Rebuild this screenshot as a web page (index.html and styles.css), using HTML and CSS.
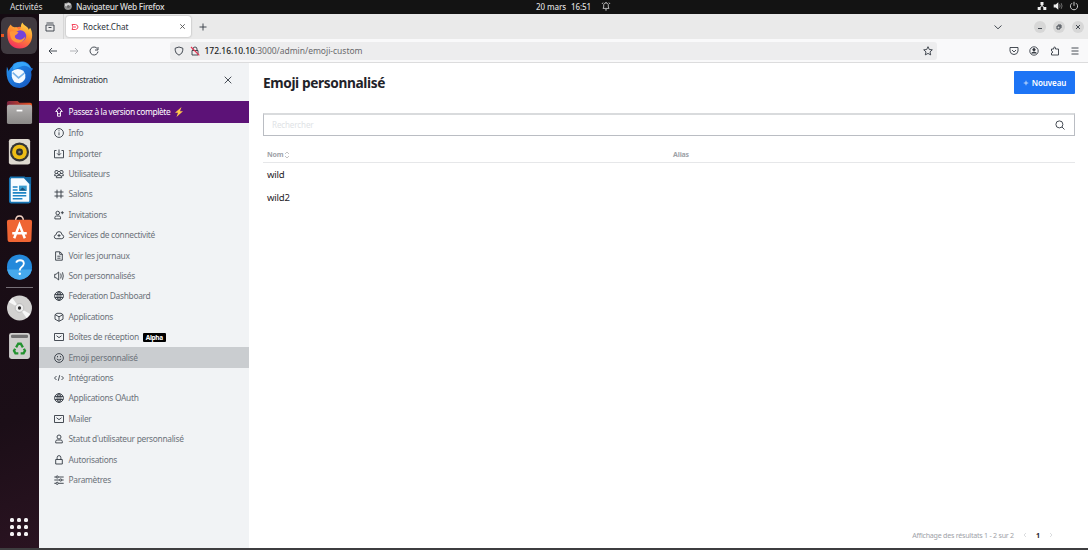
FILE: index.html
```html
<!DOCTYPE html>
<html lang="fr">
<head>
<meta charset="utf-8">
<title>Rocket.Chat</title>
<link rel="stylesheet" href="styles.css">
</head>
<body>
<svg class="defs" width="0" height="0">
  <defs>
    <linearGradient id="fire" x1=".8" y1="0" x2=".3" y2="1"><stop offset="0" stop-color="#ffe04a"/><stop offset=".45" stop-color="#ff9030"/><stop offset="1" stop-color="#f52c60"/></linearGradient>
    <linearGradient id="blue" x1="0" y1="0" x2="1" y2="1"><stop offset="0" stop-color="#2795f2"/><stop offset="1" stop-color="#1454bd"/></linearGradient>
    <linearGradient id="grey" x1="0" y1="0" x2="0" y2="1"><stop offset="0" stop-color="#b3b1b0"/><stop offset="1" stop-color="#8b8988"/></linearGradient>
    <linearGradient id="folder" x1="0" y1="0" x2="1" y2="0"><stop offset="0" stop-color="#7c2440"/><stop offset="1" stop-color="#e85420"/></linearGradient>
    <symbol id="globe" viewBox="0 0 12 12"><circle cx="6" cy="6" r="4.400"/><ellipse cx="6" cy="6" rx="2" ry="4.400"/><path d="M1.800 4.500h8.400M1.800 7.500h8.400M6 1.600v8.800"/></symbol>
    <symbol id="mail" viewBox="0 0 12 12"><path d="M1.500 2.500h9v7h-9zM3.500 4.700L6 6.700l2.500-2"/></symbol>
  </defs>
</svg>
<div class="desktop">
  <header class="topbar">
    <span class="activities">Activités</span>
    <svg class="app-icon" viewBox="0 0 10 10"><circle cx="5" cy="5.200" r="3.800" fill="#8d8d8d"/><path d="M1.500 2l2 1 2-1.500L8 3 7 5 4 5.500 2 5z" fill="#d0d0d0"/><circle cx="5.400" cy="5.600" r="1.500" fill="#666"/></svg>
    <span class="app-name">Navigateur Web Firefox</span>
    <span class="clock"><span>20 mars</span><span>16:51</span></span>
    <svg class="bell" viewBox="0 0 10 10"><path d="M2 7.400h6L7.300 6V4C7.300 2.700 6.300 2 5 2S2.700 2.700 2.700 4v2zM4 8.900h2M1 3l1-1.400M9 3L8 1.600M5 1v1"/></svg>
    <span class="tray">
      <svg viewBox="0 0 10 10" fill="#eee"><path d="M3.500 1h3v3h-3zM.7 6h3v3h-3zM6.300 6h3v3h-3z"/><path d="M5 3v2.300M2.300 7L5 4.500 7.700 7" stroke="#eee" fill="none"/></svg>
      <svg viewBox="0 0 10 10" fill="#eee"><path d="M.7 3.500h2L5.300 1.300v7.400L2.700 6.500h-2z"/><path d="M6.600 3.300q1 1.700 0 3.400M8.200 2.200q1.700 2.800 0 5.600" fill="none" stroke="#888" stroke-width=".8"/></svg>
      <svg viewBox="0 0 10 10" fill="none" stroke="#ccc"><path d="M3 2.200a3.600 3.600 0 1 0 4 0M5 .8v4"/></svg>
    </span>
  </header>
  <div class="workspace">
    <nav class="dock">
      <div class="tile active"><svg viewBox="0 0 30 30"><circle cx="15" cy="16.500" r="10.500" fill="#ff7139"/><path d="M2.500 13C2 7 5 5 6 3.500 7 6 9 6.500 12 6.500L14 9C18 8 15 5 18 1.500c1 3 6 4 6.500 7.500L26 7C31 15 27 28.500 15 28.500 7 28.500 2 22 2.500 13z" fill="url(#fire)"/><circle cx="16" cy="15.500" r="6" fill="#7543db"/><path d="M5 11c4-1 7-.5 9 1l-2 2c-3 1-2 4 1 5 4 1.500 6-1 8-3-1 6-7 8-12 5-3-2-4-6-4-10z" fill="#ff963a"/></svg></div>
      <div class="tile"><svg viewBox="0 0 30 30"><circle cx="15" cy="16" r="12" fill="url(#blue)"/><path d="M2 7l2 5 5-8C16 0 24 1 27 8l2 1-2 3c2 9-4 17-12 17C5 29 0 20 2 7z" fill="url(#blue)"/><path d="M9 5C14 0 24 1 27 9c-4-3-7-4-11-2l-8 3z" fill="#36a5fa"/><path d="M7 12q5-5 12-1l2 4q1 7-6 9-7 0-8-7z" fill="#f3f9ff"/><path d="M8 13l6 5.500 6-5" fill="none" stroke="#77b2e8" stroke-width="1.600"/></svg></div>
      <div class="tile"><svg viewBox="0 0 30 30"><path d="M2 5q0-2 2-2h9l2 2h11q2 0 2 2v8H2z" fill="url(#folder)"/><rect x="2" y="7" width="26" height="20" rx="2" fill="url(#grey)"/><path d="M12 13h6" stroke="#fff" stroke-width="1.800"/></svg></div>
      <div class="tile"><svg viewBox="0 0 30 30"><rect x="4" y="2" width="22" height="26.500" rx="2.500" fill="#ded9d0"/><circle cx="15" cy="15.500" r="9.900" fill="#353536"/><circle cx="15" cy="15.500" r="7.600" fill="#eebd16"/><circle cx="15" cy="15.500" r="3.600" fill="#303235"/><circle cx="15" cy="15.500" r="1.300" fill="#7a7a7a"/></svg></div>
      <div class="tile"><svg viewBox="0 0 30 30"><path d="M6 2.500h14L26 9v18q0 1.500-1.500 1.500h-18Q5 28.500 5 27V4z" fill="#f6fbff" stroke="#1775b4" stroke-width="1.800"/><path d="M19 2h8v8z" fill="#14659f"/><path d="M8 12.500h5M8 15.500h5M8 18.500h14M8 21.500h14M8 24.500h10" stroke="#1d84c5" stroke-width="1.600"/><path d="M14.500 11h8v5.500h-8z" fill="#389bcf"/><path d="M15 16l3-3 4 3z" fill="#174e78"/></svg></div>
      <div class="tile"><svg viewBox="0 0 30 30"><path d="M11 7q0-5 4-5t4 5" fill="none" stroke="#f5d5c7" stroke-width="1.500"/><path d="M2 8q0-2 2-2h22q2 0 2 2l-.7 19q0 2-2 2H4.700q-2 0-2-2z" fill="#ef6534"/><path d="M9.500 25L15 11l5.500 14M7.500 20h15" fill="none" stroke="#fff" stroke-width="2.600"/></svg></div>
      <div class="tile"><svg viewBox="0 0 30 30"><circle cx="15" cy="15.500" r="13" fill="#2489db"/><path d="M2.200 18h25.600A13 13 0 0 1 2.200 18z" fill="#46a9ec"/><path d="M11.500 11q1-2.500 4-2.500 4 0 4 3.500 0 2-2.500 3.700-1.700 1.200-1.700 3.500" fill="none" stroke="#fff" stroke-width="1.900"/><circle cx="15.300" cy="22.500" r="1.300" fill="#fff"/></svg></div>
      <div class="separator"></div>
      <div class="tile"><svg viewBox="0 0 30 30"><circle cx="15" cy="15.500" r="12.900" fill="#d2d1d0"/><path d="M15 15.500L3.800 9.200 7.500 5zM15 15.500l11.200 6.300L22.500 26z" fill="#f7f7f7"/><circle cx="15" cy="15.500" r="4.500" fill="#eee" stroke="#bbb"/><circle cx="15" cy="15.500" r="1.700" fill="#2c2b2c"/></svg></div>
      <div class="tile"><svg viewBox="0 0 30 30"><rect x="4.200" y="2" width="21.600" height="27" rx="2.500" fill="#cfcfcd"/><rect x="6.200" y="4" width="17.600" height="3.200" rx="1.300" fill="#727272"/><g fill="none" stroke="#23922f" stroke-width="2.400"><path d="M11.500 17l2.200-3.800h2.600l2.200 3.800M19.500 18.300l1.200 2.200-1.500 2.700h-3M13.800 23.200h-3L9.300 20.500l1.200-2.200"/></g></svg></div>
      <div class="apps"><i></i><i></i><i></i><i></i><i></i><i></i><i></i><i></i><i></i></div>
    </nav>
    <section class="browser">
      <div class="tabs">
        <div class="recent"><svg class="ic" viewBox="0 0 12 12"><path d="M2 4h8v6H2zM2.500 2h7M4.500 6.500h3"/></svg></div>
        <div class="tab"><svg class="rocket" viewBox="0 0 8 8"><path d="M1 1.500h3.500Q7 2 7 4T4.500 6.500H1L2 4zM2.500 4H5"/></svg><span>Rocket.Chat</span><svg class="tab-close" viewBox="0 0 8 8"><path d="M2 2l4 4M6 2L2 6"/></svg></div>
        <svg class="ic plus" viewBox="0 0 12 12"><path d="M6 2.500v7M2.500 6h7"/></svg>
        <svg class="ic chevron" viewBox="0 0 12 12"><path d="M2.500 4.500L6 7.800l3.500-3.300"/></svg>
        <span class="winbtn"><svg class="ic" viewBox="0 0 12 12"><path d="M4 7.500h4"/></svg></span>
        <span class="winbtn"><svg class="ic" viewBox="0 0 12 12"><path d="M4 5h3v3H4zM5 4h3v3"/></svg></span>
        <span class="winbtn"><svg class="ic" viewBox="0 0 12 12"><path d="M4 4l4 4M8 4L4 8"/></svg></span>
      </div>
      <div class="toolbar">
        <svg class="ic" viewBox="0 0 12 12"><path d="M10 6H2M5 3L2 6l3 3"/></svg>
        <svg class="ic dim" viewBox="0 0 12 12"><path d="M2 6h8M7 3l3 3-3 3"/></svg>
        <svg class="ic" viewBox="0 0 12 12"><path d="M9.300 3.700A4 4 0 1 0 10 6.500M10 2v3H7"/></svg>
        <div class="url">
          <svg class="ic" viewBox="0 0 12 12"><path d="M6 2l3.800 1.200v2Q9.800 8.500 6 10.200 2.200 8.500 2.200 5.200v-2z"/></svg>
          <svg class="ic" viewBox="0 0 12 12"><path d="M3 5.500h6V10H3zM4 5.500V4q0-2 2-2t2 2v1.500"/><path d="M2 2l8.300 8.300" stroke="#e23351" stroke-width="1.200"/></svg>
          <span class="address"><b>172.16.10.10</b>:3000/admin/emoji-custom</span>
          <svg class="ic star" viewBox="0 0 12 12"><path d="M6 1.700l1.300 2.800 3 .3L8 6.900l.7 3L6 8.400 3.300 9.900l.7-3-2.300-2.100 3-.3z"/></svg>
        </div>
        <div class="tools">
          <svg class="ic" viewBox="0 0 12 12"><path d="M2 2.500h8V6q-.5 3.500-4 3.500T2 6zM4 5l2 2 2-2"/></svg>
          <svg class="ic" viewBox="0 0 12 12"><circle cx="6" cy="6" r="4.200"/><circle cx="6" cy="4.700" r="1.200" fill="#333"/><path d="M3.700 8q2.300-2 4.600 0z" fill="#333"/></svg>
          <svg class="ic" viewBox="0 0 12 12"><path d="M2.500 4h2.200V3q.8-2.500 1.800 0v1H9.500v6h-7V8q3-.7 0-2z"/></svg>
          <svg class="ic" viewBox="0 0 12 12"><path d="M2.500 3h7M2.500 6h7M2.500 9h7"/></svg>
        </div>
      </div>
      <div class="page">
        <aside class="sidebar">
          <div class="side-head"><span>Administration</span><svg class="ic" viewBox="0 0 12 12"><path d="M2.700 2.700l6.600 6.600M9.300 2.700L2.700 9.300"/></svg></div>
          <a class="upgrade"><svg class="ic" viewBox="0 0 12 12"><path d="M6 1.500L9.300 5.500H7.500v4.700h-3V5.500H2.700zM4.500 7.700h3"/></svg><span>Passez à la version complète</span><svg class="bolt" viewBox="0 0 10 10"><path d="M7.500 0L1 5.700h3L2.500 10 9 4.200H6z" fill="#ffc84a"/></svg></a>
          <a class="item"><svg class="ic" viewBox="0 0 12 12"><circle cx="6" cy="6" r="4.400"/><path d="M6 5.300v3M6 3.300v1"/></svg><span>Info</span></a>
          <a class="item"><svg class="ic" viewBox="0 0 12 12"><path d="M3.500 2.500h-2v7.300h9V2.500h-2M6 1.500V7M4 5.300l2 2 2-2"/></svg><span>Importer</span></a>
          <a class="item"><svg class="ic" viewBox="0 0 12 12"><circle cx="6" cy="4.900" r="1.600"/><path d="M3.300 9.700Q3 7.200 6 7.200t2.700 2.500zM4 5.500H2.300Q1.300 4 2.500 2.600h2.300M8 5.500h1.700q1-1.500-.2-2.900H7.200M3.300 7.700H1.600l.4-1.700M8.700 7.700h1.700L10 6"/></svg><span>Utilisateurs</span></a>
          <a class="item"><svg class="ic" viewBox="0 0 12 12"><path d="M4 1.700v8.600M8 1.700v8.600M1.500 4h9M1.500 8h9"/></svg><span>Salons</span></a>
          <a class="item"><svg class="ic" viewBox="0 0 12 12"><circle cx="4.700" cy="4" r="1.800"/><path d="M1.900 9.900V8.200q.3-1.200 1.400-1.200h2.800q1.300 0 1.400 1.200v1.700zM9.300 2.200v3M7.800 3.700h3"/></svg><span>Invitations</span></a>
          <a class="item"><svg class="ic" viewBox="0 0 12 12"><path d="M3.200 9.700Q1.300 9.600 1.300 7.700q0-1.700 1.700-1.900Q3.300 2.600 6 2.600t3 3.200q1.700.2 1.700 1.900T8.800 9.700zM6 5v3.200M4.400 6.600h3.200"/></svg><span>Services de connectivité</span></a>
          <a class="item"><svg class="ic" viewBox="0 0 12 12"><path d="M2.600 1.800h4.200L9.300 4v6.200H2.600zM6.700 2v2.300h2.500M4.300 6.200h3.200M4.300 8.200h3.200"/></svg><span>Voir les journaux</span></a>
          <a class="item"><svg class="ic" viewBox="0 0 12 12"><path d="M1.700 4.300H3L5.700 2v8L3 7.700H1.700zM7.700 3.500q1 2.500 0 5M9.500 2.300q1.500 3.700 0 7.400"/></svg><span>Son personnalisés</span></a>
          <a class="item"><svg class="ic"><use href="#globe"/></svg><span>Federation Dashboard</span></a>
          <a class="item"><svg class="ic" viewBox="0 0 12 12"><path d="M4 2.300h4l2 1.400v4.500L6 10.300l-4-2.100V3.700zM2.200 3.700L6 5.800l3.800-2.100M6 5.800v4.500"/></svg><span>Applications</span></a>
          <a class="item"><svg class="ic"><use href="#mail"/></svg><span>Boîtes de réception</span><b class="badge">Alpha</b></a>
          <a class="item selected"><svg class="ic" viewBox="0 0 12 12"><circle cx="6" cy="6" r="4.400"/><path d="M4.500 4v1.300M7.500 4v1.300M3.800 7q2.200 2.500 4.400 0"/></svg><span>Emoji personnalisé</span></a>
          <a class="item"><svg class="ic" viewBox="0 0 12 12"><path d="M3.500 4l-2 2 2 2M8.500 4l2 2-2 2M6.700 3.200L5.300 8.800"/></svg><span>Intégrations</span></a>
          <a class="item"><svg class="ic"><use href="#globe"/></svg><span>Applications OAuth</span></a>
          <a class="item"><svg class="ic"><use href="#mail"/></svg><span>Mailer</span></a>
          <a class="item"><svg class="ic" viewBox="0 0 12 12"><circle cx="6" cy="4" r="2"/><path d="M2.700 9.900V8.300Q3 7 4 7h4q1 0 1.300 1.300v1.600z"/></svg><span>Statut d'utilisateur personnalisé</span></a>
          <a class="item"><svg class="ic" viewBox="0 0 12 12"><path d="M2.700 5.500h6.600V10H2.700zM4.100 5.500V3.700q0-2.100 1.900-2.100t1.900 2.100v1.800"/></svg><span>Autorisations</span></a>
          <a class="item"><svg class="ic" viewBox="0 0 12 12"><path d="M1.300 3H3M5.300 3h5.400M1.300 6h5.300M8.800 6h1.900M1.300 9.300H3M5.300 9.300h5.400"/><circle cx="4.200" cy="3" r="1.100"/><circle cx="7.700" cy="6" r="1.100"/><circle cx="4.200" cy="9.300" r="1.100"/></svg><span>Paramètres</span></a>
        </aside>
        <main class="content">
          <div class="head"><h1>Emoji personnalisé</h1><button class="new"><svg viewBox="0 0 8 8"><path d="M4 1v6M1 4h6"/></svg><span>Nouveau</span></button></div>
          <div class="search"><span>Rechercher</span><svg class="ic" viewBox="0 0 12 12"><circle cx="5.400" cy="5.400" r="3.500"/><path d="M8 8l2.500 2.500"/></svg></div>
          <div class="thead"><span class="nom">Nom</span><svg class="sort" viewBox="0 0 8 8"><path d="M2 3l2-2 2 2M2 5l2 2 2-2"/></svg><span class="alias">Alias</span></div>
          <div class="row">wild</div>
          <div class="row">wild2</div>
          <footer class="pager"><span class="results">Affichage des résultats 1 - 2 sur 2</span><svg viewBox="0 0 6 8"><path d="M4 2L2 4l2 2"/></svg><b>1</b><svg viewBox="0 0 6 8"><path d="M2 2l2 2-2 2"/></svg></footer>
        </main>
      </div>
    </section>
  </div>
</div>
</body>
</html>
```
FILE: styles.css
```css
* { box-sizing: border-box; }
body { margin: 0; font-family: "Noto Sans", "Open Sans", sans-serif; font-size: 8px; color: #2f343d; }
svg { display: block; flex: none; }
.defs { position: absolute; }
.desktop { width: 1088px; height: 550px; display: flex; flex-direction: column; overflow: hidden; background: #fff; }
.topbar { height: 14px; flex: none; background: #131313; color: #ddd; display: flex; align-items: center; padding: 0 9px 2px 10px; white-space: nowrap; }
.activities { width: 53px; font-size: 8.400px; letter-spacing: -.02px; }
.app-icon { width: 10px; height: 10px; margin-right: 3px; }
.app-name { width: 460px; font-size: 8.400px; font-weight: 500; letter-spacing: -.27px; }
.clock { display: flex; gap: 5px; width: 65px; font-weight: 500; letter-spacing: -.1px; }
.bell { width: 10px; height: 10px; fill: none; stroke: #ddd; stroke-width: .8; }
.tray { display: flex; gap: 6px; margin-left: auto; }
.tray svg { width: 10px; height: 10px; }
.workspace { flex: 1; min-height: 0; display: flex; border-bottom: 2px solid #3e3e40; }
.dock { width: 39px; flex: none; padding: 3px 2px 0 1px; background: linear-gradient(160deg, #150b12, #1b0e17 75%, #2a1321); display: flex; flex-direction: column; align-items: center; }
.tile { width: 36px; height: 38.500px; display: grid; place-items: center; }
.tile svg { width: 29px; height: 29px; }
.tile.active { height: 37px; border-radius: 6px; background: radial-gradient(circle at 1.500px 50%, #e95420 1.500px, transparent 2px), #403a40; margin-bottom: 1px; }
.separator { width: 27px; height: 1px; background: #777077; margin: 1px 0 0; }
.apps { margin-top: auto; margin-bottom: 12.500px; display: grid; grid-template-columns: repeat(3, 4px); gap: 3px; }
.apps i { width: 4px; height: 4px; border-radius: 1.500px; background: #f5f3f5; }
.browser { flex: 1; min-width: 0; display: flex; flex-direction: column; }
.ic { width: 12px; height: 12px; fill: none; stroke: #333a43; stroke-width: .9; }
.tabs { height: 25px; flex: none; background: #eaeaea; display: flex; align-items: center; padding-right: 4px; }
.recent { width: 25px; height: 25px; padding: 7px 5px; border-right: 1px solid #d7d7d7; }
.tab { width: 125px; height: 21px; margin-left: 2px; padding: 0 4px 0 5px; border-radius: 3px; background: #fff; box-shadow: 0 0 2px #999; display: flex; align-items: center; font-size: 8.200px; }
.rocket { width: 8px; height: 8px; margin-right: 4px; fill: none; stroke: #f5455c; }
.tab-close { width: 9px; height: 9px; margin-left: auto; fill: none; stroke: #555; stroke-width: .8; }
.plus { margin-left: 6px; }
.chevron { margin-left: auto; margin-right: 23px; }
.winbtn { width: 12px; height: 12px; border-radius: 50%; background: #d7d7d7; margin-left: 7px; }
.toolbar { height: 24px; flex: none; background: #f9f9fa; border-bottom: 1px solid #dcdcdd; display: flex; align-items: center; gap: 8.500px; padding: 0 7px 0 8px; }
.dim { opacity: .4; }
.url { height: 18px; width: 767px; margin-left: 61px; padding: 0 3px; border-radius: 3px; background: #ededee; display: flex; align-items: center; gap: 4px; color: #6a6a6d; white-space: nowrap; }
.address { font-size: 8.500px; letter-spacing: -.02px; }
.address b { font-weight: 500; color: #222; }
.star { margin-left: auto; }
.tools { margin-left: auto; display: flex; gap: 8.500px; }
.page { flex: 1; min-height: 0; display: flex; }
.sidebar { width: 210px; flex: none; background: #f1f3f5; white-space: nowrap; font-size: 8.400px; letter-spacing: -.3px; }
.side-head { height: 38px; padding: 0 15px 5px 14px; display: flex; justify-content: space-between; align-items: center; letter-spacing: -.26px; }
.upgrade { height: 22px; padding-left: 13.500px; display: flex; align-items: center; gap: 4px; background: #5c1277; color: #fff; letter-spacing: -.37px; }
.upgrade span, .item span { padding-bottom: 1px; }
.upgrade .ic { stroke: #fff; }
.bolt { width: 10px; height: 10px; }
.item { height: 20.420px; padding-left: 13.500px; display: flex; align-items: center; gap: 4px; color: #6c727a; }
.item.selected { background: #cacdd0; }
.badge { padding: 0 3px; height: 9px; line-height: 9px; font-size: 6.500px; letter-spacing: -.35px; background: #000; color: #fff; border-radius: 1px; }
.content { flex: 1; min-width: 0; padding: 8px 13px 6px 14px; display: flex; flex-direction: column; }
.head { height: 23px; display: flex; justify-content: space-between; align-items: center; }
h1 { margin: 0; font-size: 13.700px; font-weight: 700; letter-spacing: -.38px; color: #1f2329; }
.new { width: 61px; height: 23px; padding: 0; border: 0; border-radius: 1px; background: #1d74f5; color: #fff; font: 600 8px "Noto Sans", sans-serif; letter-spacing: -.1px; display: flex; align-items: center; justify-content: center; gap: 3px; }
.new svg { width: 6px; height: 6px; fill: none; stroke: #fff; stroke-width: .9; }
.search { height: 23px; margin-top: 19px; padding: 0 8px; border: 1px solid #babdc3; border-top: 2px solid #d9dbdd; display: flex; align-items: center; justify-content: space-between; color: #e0e3e6; letter-spacing: -.1px; }
.search span { padding-bottom: 1px; }
.thead { height: 27px; padding: 11px 4px 0; border-bottom: 1px solid #e6e7e9; display: flex; font-size: 7px; line-height: 16px; font-weight: 700; letter-spacing: -.15px; color: #9ea2a8; }
.sort { width: 8px; height: 8px; margin: 4px 0 0 0; fill: none; stroke: #aaa; stroke-width: .7; }
.thead .nom { width: 16px; }
.alias { margin-left: 382px; }
.row { height: 23px; padding-left: 4px; line-height: 23px; font-size: 9.600px; letter-spacing: -.25px; color: #1f2329; }
.pager { margin-top: auto; height: 15px; padding-right: 21px; display: flex; align-items: center; justify-content: flex-end; gap: 8px; font-size: 7.100px; color: #9ea2a8; }
.results { letter-spacing: -.24px; }
.pager b { color: #1f2329; }
.pager svg { width: 6px; height: 8px; fill: none; stroke: #cbced1; stroke-width: .7; }
```
